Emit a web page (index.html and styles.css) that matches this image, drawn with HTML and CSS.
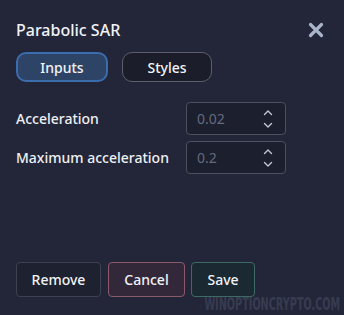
FILE: index.html
```html
<!DOCTYPE html>
<html lang="en">
<head>
    <meta charset="UTF-8">
    <meta name="viewport" content="width=device-width, initial-scale=1.0">
    <title>Parabolic SAR</title>
    <link rel="stylesheet" href="styles.css">
</head>
<body>
    <div class="dialog">
        <div class="header">
            <div class="title">Parabolic SAR</div>
            <button class="close-btn" aria-label="Close">
                <svg width="16" height="16" viewBox="0 0 16 16">
                    <path d="M2.5 2.5L13.5 13.5M13.5 2.5L2.5 13.5" stroke="#a9b4ca" stroke-width="3.2" stroke-linecap="round"/>
                </svg>
            </button>
        </div>

        <div class="tabs">
            <button class="tab active">Inputs</button>
            <button class="tab">Styles</button>
        </div>

        <div class="fields">
            <div class="field">
                <label>Acceleration</label>
                <div class="spinner">
                    <span class="value">0.02</span>
                    <span class="arrows">
                        <svg width="10" height="22" viewBox="0 0 10 22">
                            <path d="M1.5 6.5L5 3L8.5 6.5M1.5 15.5L5 19L8.5 15.5" fill="none" stroke="#c3c8d4" stroke-width="1.4" stroke-linecap="round" stroke-linejoin="round"/>
                        </svg>
                    </span>
                </div>
            </div>
            <div class="field">
                <label>Maximum acceleration</label>
                <div class="spinner">
                    <span class="value">0.2</span>
                    <span class="arrows">
                        <svg width="10" height="22" viewBox="0 0 10 22">
                            <path d="M1.5 6.5L5 3L8.5 6.5M1.5 15.5L5 19L8.5 15.5" fill="none" stroke="#c3c8d4" stroke-width="1.4" stroke-linecap="round" stroke-linejoin="round"/>
                        </svg>
                    </span>
                </div>
            </div>
        </div>

        <div class="footer">
            <button class="btn remove">Remove</button>
            <button class="btn cancel">Cancel</button>
            <button class="btn save">Save</button>
        </div>

        <div class="watermark">WINOPTIONCRYPTO.COM</div>
    </div>
</body>
</html>
```

FILE: styles.css
```css
body {
    margin: 0;
    padding: 0;
    background: #232638;
    font-family: 'Noto Sans', 'Open Sans', Arial, sans-serif;
    color: #f2f3f7;
}
.dialog {
    position: relative;
    width: 344px;
    height: 315px;
    box-sizing: border-box;
    padding: 18px 16px 0 16px;
    display: flex;
    flex-direction: column;
    overflow: hidden;
}
.header {
    display: flex;
    justify-content: space-between;
    align-items: center;
    height: 24px;
}
.title {
    font-size: 16px;
    font-weight: 500;
    color: #f1f2f6;
}
.close-btn {
    background: none;
    border: none;
    padding: 0;
    margin-right: 4px;
    width: 16px;
    height: 16px;
    cursor: pointer;
}
.tabs {
    display: flex;
    gap: 14px;
    margin-top: 10px;
}
.tab {
    height: 30px;
    width: 90px;
    border-radius: 10px;
    border: 1px solid #5b5f6c;
    background: #1b1d2a;
    color: #f2f3f7;
    font-family: inherit;
    font-size: 14px;
    font-weight: 500;
    padding: 0;
    cursor: pointer;
}
.tab.active {
    width: 92px;
    background: #2e4466;
    border: 2px solid #3b6cae;
}
.fields {
    display: flex;
    flex-direction: column;
    gap: 6px;
    margin-top: 20px;
}
.field {
    display: flex;
    align-items: center;
    justify-content: space-between;
    width: 270px;
}
label {
    font-size: 14px;
    font-weight: 500;
    color: #eef0f4;
}
.spinner {
    width: 100px;
    height: 33px;
    border: 1px solid #4b4f5e;
    border-radius: 4px;
    background: #1c1f2d;
    display: flex;
    align-items: center;
    justify-content: space-between;
    padding: 0 12px 0 10px;
    box-sizing: border-box;
}
.value {
    font-size: 14px;
    color: #646a7e;
}
.arrows {
    display: flex;
}
.footer {
    display: flex;
    gap: 7px;
    margin-top: auto;
    margin-bottom: 18px;
}
.btn {
    height: 35px;
    border-radius: 4px;
    font-family: inherit;
    font-size: 14px;
    font-weight: 500;
    color: #f2f3f7;
    padding: 0;
    cursor: pointer;
}
.remove {
    width: 85px;
    background: #1e2130;
    border: 1px solid #3d4150;
}
.cancel {
    width: 77px;
    background: #33283a;
    border: 1px solid #8a5a6a;
}
.save {
    width: 64px;
    margin-left: -1px;
    background: #1b2932;
    border: 1px solid #3e6a66;
}
.watermark {
    position: absolute;
    right: 4px;
    bottom: 1px;
    font-family: 'DejaVu Sans', sans-serif;
    font-weight: bold;
    font-size: 17px;
    letter-spacing: 0;
    color: rgba(90, 95, 120, 0.4);
    transform: scaleX(0.57);
    transform-origin: right bottom;
}
```
